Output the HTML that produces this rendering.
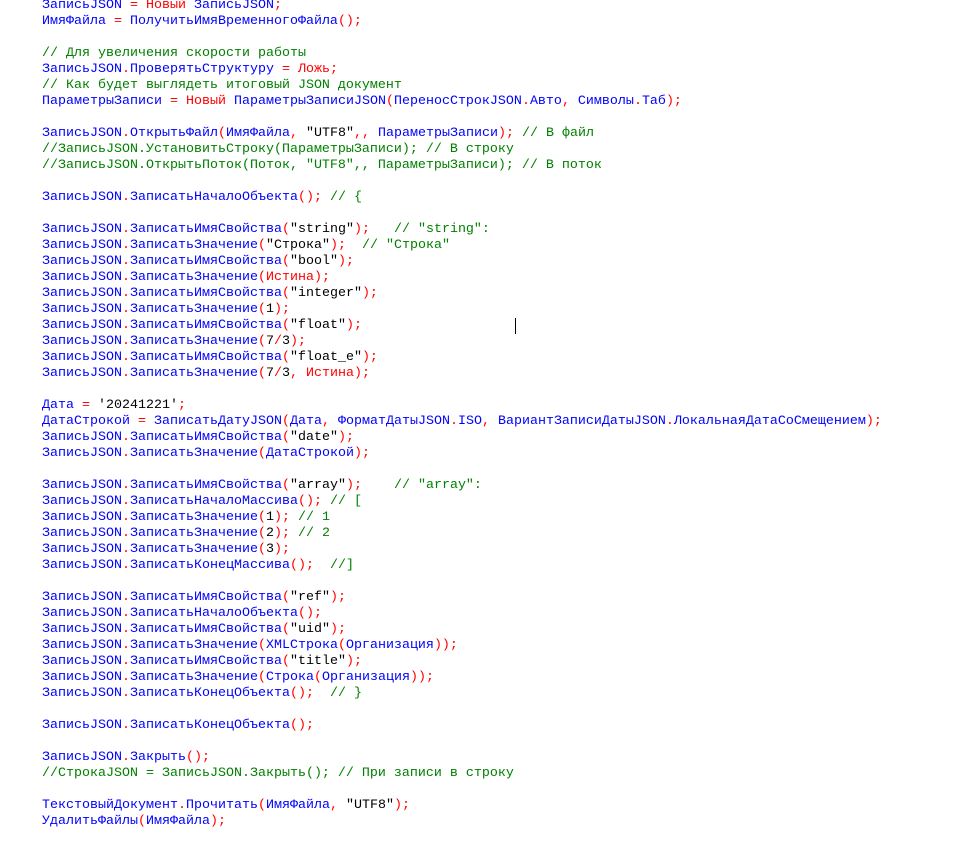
<!DOCTYPE html>
<html><head><meta charset="utf-8"><style>
html,body{margin:0;padding:0;background:#fff;width:969px;height:850px;overflow:hidden}
pre{margin:0;position:absolute;left:42px;top:-2px;font-family:"Liberation Mono","DejaVu Sans Mono",monospace;font-size:13.33px;line-height:16px;color:#0000ff}
i{font-style:normal;color:#ff0000}
b{font-weight:normal;color:#008000}
s{text-decoration:none;color:#000}
.cur{position:absolute;left:515px;top:318px;width:1px;height:16px;background:#000}
</style></head><body>
<pre>ЗаписьJSON <i>=</i> <i>Новый</i> ЗаписьJSON<i>;</i>
ИмяФайла <i>=</i> ПолучитьИмяВременногоФайла<i>();</i>

<b>// Для увеличения скорости работы</b>
ЗаписьJSON<i>.</i>ПроверятьСтруктуру <i>=</i> <i>Ложь;</i>
<b>// Как будет выглядеть итоговый JSON документ</b>
ПараметрыЗаписи <i>=</i> <i>Новый</i> ПараметрыЗаписиJSON<i>(</i>ПереносСтрокJSON<i>.</i>Авто<i>,</i> Символы<i>.</i>Таб<i>);</i>

ЗаписьJSON<i>.</i>ОткрытьФайл<i>(</i>ИмяФайла<i>,</i> <s>"UTF8"</s><i>,,</i> ПараметрыЗаписи<i>);</i> <b>// В файл</b>
<b>//ЗаписьJSON.УстановитьСтроку(ПараметрыЗаписи); // В строку</b>
<b>//ЗаписьJSON.ОткрытьПоток(Поток, "UTF8",, ПараметрыЗаписи); // В поток</b>

ЗаписьJSON<i>.</i>ЗаписатьНачалоОбъекта<i>();</i> <b>// {</b>

ЗаписьJSON<i>.</i>ЗаписатьИмяСвойства<i>(</i><s>"string"</s><i>);</i>   <b>// "string":</b>
ЗаписьJSON<i>.</i>ЗаписатьЗначение<i>(</i><s>"Строка"</s><i>);</i>  <b>// "Строка"</b>
ЗаписьJSON<i>.</i>ЗаписатьИмяСвойства<i>(</i><s>"bool"</s><i>);</i>
ЗаписьJSON<i>.</i>ЗаписатьЗначение<i>(Истина);</i>
ЗаписьJSON<i>.</i>ЗаписатьИмяСвойства<i>(</i><s>"integer"</s><i>);</i>
ЗаписьJSON<i>.</i>ЗаписатьЗначение<i>(</i><s>1</s><i>);</i>
ЗаписьJSON<i>.</i>ЗаписатьИмяСвойства<i>(</i><s>"float"</s><i>);</i>
ЗаписьJSON<i>.</i>ЗаписатьЗначение<i>(</i><s>7</s><i>/</i><s>3</s><i>);</i>
ЗаписьJSON<i>.</i>ЗаписатьИмяСвойства<i>(</i><s>"float_e"</s><i>);</i>
ЗаписьJSON<i>.</i>ЗаписатьЗначение<i>(</i><s>7</s><i>/</i><s>3</s><i>, Истина);</i>

Дата <i>=</i> <s>'20241221'</s><i>;</i>
ДатаСтрокой <i>=</i> ЗаписатьДатуJSON<i>(</i>Дата<i>,</i> ФорматДатыJSON<i>.</i>ISO<i>,</i> ВариантЗаписиДатыJSON<i>.</i>ЛокальнаяДатаСоСмещением<i>);</i>
ЗаписьJSON<i>.</i>ЗаписатьИмяСвойства<i>(</i><s>"date"</s><i>);</i>
ЗаписьJSON<i>.</i>ЗаписатьЗначение<i>(</i>ДатаСтрокой<i>);</i>

ЗаписьJSON<i>.</i>ЗаписатьИмяСвойства<i>(</i><s>"array"</s><i>);</i>    <b>// "array":</b>
ЗаписьJSON<i>.</i>ЗаписатьНачалоМассива<i>();</i> <b>// [</b>
ЗаписьJSON<i>.</i>ЗаписатьЗначение<i>(</i><s>1</s><i>);</i> <b>// 1</b>
ЗаписьJSON<i>.</i>ЗаписатьЗначение<i>(</i><s>2</s><i>);</i> <b>// 2</b>
ЗаписьJSON<i>.</i>ЗаписатьЗначение<i>(</i><s>3</s><i>);</i>
ЗаписьJSON<i>.</i>ЗаписатьКонецМассива<i>();</i>  <b>//]</b>

ЗаписьJSON<i>.</i>ЗаписатьИмяСвойства<i>(</i><s>"ref"</s><i>);</i>
ЗаписьJSON<i>.</i>ЗаписатьНачалоОбъекта<i>();</i>
ЗаписьJSON<i>.</i>ЗаписатьИмяСвойства<i>(</i><s>"uid"</s><i>);</i>
ЗаписьJSON<i>.</i>ЗаписатьЗначение<i>(</i>XMLСтрока<i>(</i>Организация<i>));</i>
ЗаписьJSON<i>.</i>ЗаписатьИмяСвойства<i>(</i><s>"title"</s><i>);</i>
ЗаписьJSON<i>.</i>ЗаписатьЗначение<i>(</i>Строка<i>(</i>Организация<i>));</i>
ЗаписьJSON<i>.</i>ЗаписатьКонецОбъекта<i>();</i>  <b>// }</b>

ЗаписьJSON<i>.</i>ЗаписатьКонецОбъекта<i>();</i>

ЗаписьJSON<i>.</i>Закрыть<i>();</i>
<b>//СтрокаJSON = ЗаписьJSON.Закрыть(); // При записи в строку</b>

ТекстовыйДокумент<i>.</i>Прочитать<i>(</i>ИмяФайла<i>,</i> <s>"UTF8"</s><i>);</i>
УдалитьФайлы<i>(</i>ИмяФайла<i>);</i></pre>
<div class="cur"></div>
</body></html>
